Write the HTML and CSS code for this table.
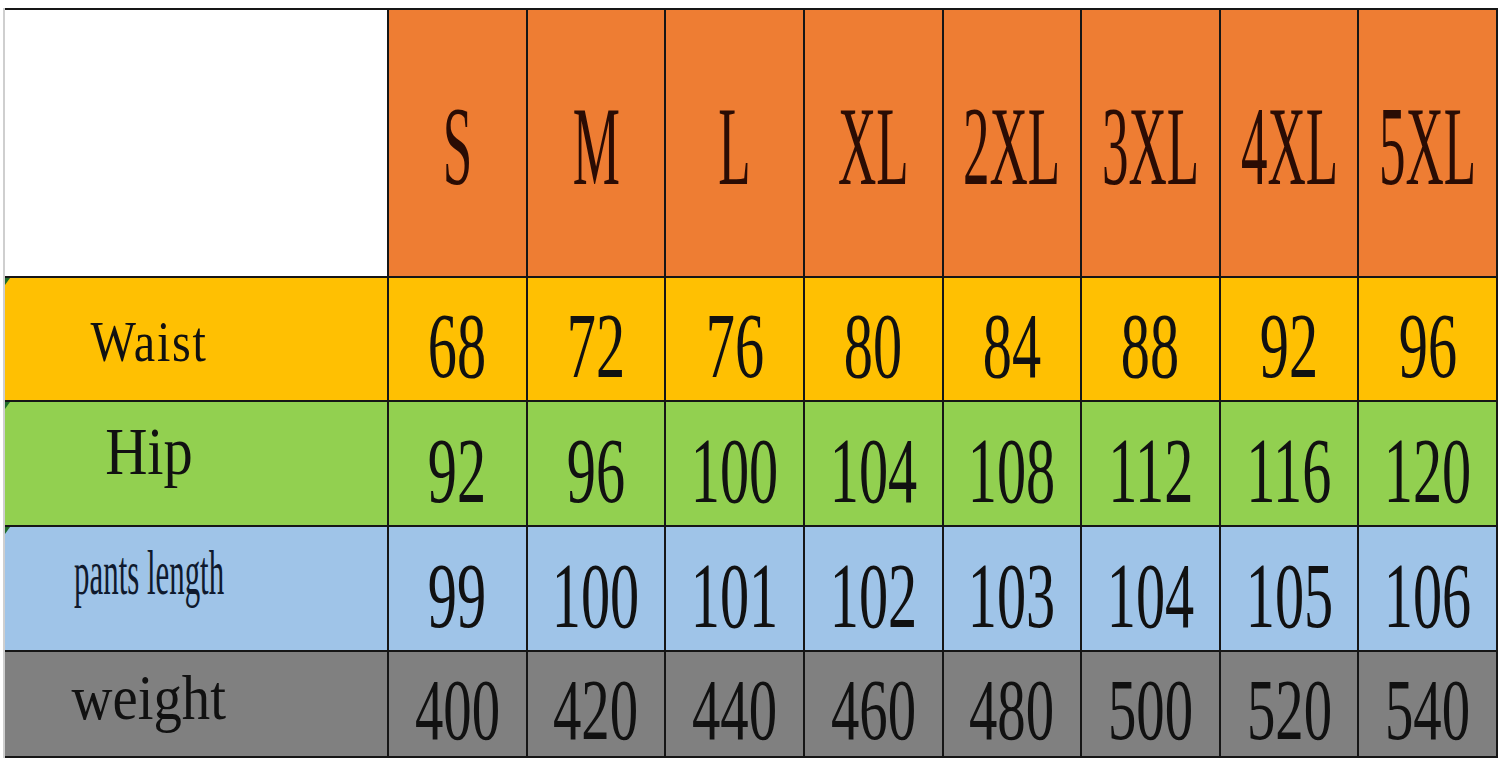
FILE: index.html
```html
<!DOCTYPE html>
<html lang="en">
<head>
<meta charset="utf-8">
<title>Size chart</title>
<link rel="stylesheet" href="styles.css">
</head>
<body>
<div class="chart">
  <div class="cell corner"></div>
  <div class="cell head"><span>S</span></div>
  <div class="cell head"><span>M</span></div>
  <div class="cell head"><span>L</span></div>
  <div class="cell head"><span>XL</span></div>
  <div class="cell head"><span>2XL</span></div>
  <div class="cell head"><span>3XL</span></div>
  <div class="cell head"><span>4XL</span></div>
  <div class="cell head"><span>5XL</span></div>

  <div class="cell label waist mark"><span>Waist</span></div>
  <div class="cell num waist"><span>68</span></div>
  <div class="cell num waist"><span>72</span></div>
  <div class="cell num waist"><span>76</span></div>
  <div class="cell num waist"><span>80</span></div>
  <div class="cell num waist"><span>84</span></div>
  <div class="cell num waist"><span>88</span></div>
  <div class="cell num waist"><span>92</span></div>
  <div class="cell num waist"><span>96</span></div>

  <div class="cell label hip mark"><span>Hip</span></div>
  <div class="cell num hip"><span>92</span></div>
  <div class="cell num hip"><span>96</span></div>
  <div class="cell num hip"><span>100</span></div>
  <div class="cell num hip"><span>104</span></div>
  <div class="cell num hip"><span>108</span></div>
  <div class="cell num hip"><span>112</span></div>
  <div class="cell num hip"><span>116</span></div>
  <div class="cell num hip"><span>120</span></div>

  <div class="cell label pants mark"><span>pants length</span></div>
  <div class="cell num pants"><span>99</span></div>
  <div class="cell num pants"><span>100</span></div>
  <div class="cell num pants"><span>101</span></div>
  <div class="cell num pants"><span>102</span></div>
  <div class="cell num pants"><span>103</span></div>
  <div class="cell num pants"><span>104</span></div>
  <div class="cell num pants"><span>105</span></div>
  <div class="cell num pants"><span>106</span></div>

  <div class="cell label weight"><span>weight</span></div>
  <div class="cell num weight"><span>400</span></div>
  <div class="cell num weight"><span>420</span></div>
  <div class="cell num weight"><span>440</span></div>
  <div class="cell num weight"><span>460</span></div>
  <div class="cell num weight"><span>480</span></div>
  <div class="cell num weight"><span>500</span></div>
  <div class="cell num weight"><span>520</span></div>
  <div class="cell num weight"><span>540</span></div>
</div>
</body>
</html>
```
FILE: styles.css
```css
html, body {
  margin: 0;
  padding: 0;
  background: #ffffff;
}

body {
  padding: 8px 2px 6px 3px;
  font-family: "Liberation Serif", "Times New Roman", serif;
}

.chart {
  display: grid;
  grid-template-columns: 382px repeat(8, minmax(0, 1fr));
  grid-template-rows: 266px 122px 123px 123px 104px;
  gap: 2px;
  padding: 2px 2px 2px 0;
  border-left: 2px solid #cfcfcf;
  background: #161616;
  height: 750px;
  box-sizing: border-box;
}

.cell {
  display: flex;
  align-items: center;
  justify-content: center;
  position: relative;
  min-width: 0;
  min-height: 0;
  box-sizing: border-box;
}

.cell span {
  display: inline-block;
  line-height: 1;
  white-space: nowrap;
}

.corner {
  background: #ffffff;
}

.head {
  background: #ee7d33;
  padding-top: 4px;
}

.head span {
  font-size: 113px;
  color: #2a0c04;
  transform: scaleX(0.47);
}

.num span {
  font-size: 94px;
  color: #111111;
  transform: scaleX(0.62);
}

.num {
  padding-top: 12px;
}

.num.weight {
  padding-top: 14px;
}

.num.weight span {
  font-size: 86px;
  line-height: 0.9;
  transform: scaleX(0.66);
}

.waist { background: #ffc002; }
.hip { background: #92d050; }
.pants { background: #9fc4e8; }
.weight { background: #808080; }

.label {
  padding-right: 94px;
}

.label span {
  color: #111111;
}

.label.waist { padding-top: 5px; }
.label.waist span {
  font-size: 56px;
  letter-spacing: 2px;
  transform: scaleX(0.86);
}

.label.hip { padding-bottom: 26px; }
.label.hip span {
  font-size: 68px;
  transform: scaleX(0.86);
}

.label.pants { padding-bottom: 30px; }
.label.pants span {
  font-size: 63px;
  color: #0f1a2e;
  transform: scaleX(0.49);
}

.label.weight { padding-bottom: 11px; }
.label.weight span {
  font-size: 63px;
  transform: scaleX(0.9);
}

.mark::before {
  content: "";
  position: absolute;
  left: 0;
  top: 0;
  border-top: 7px solid #1f6b2a;
  border-right: 5px solid transparent;
}
```
